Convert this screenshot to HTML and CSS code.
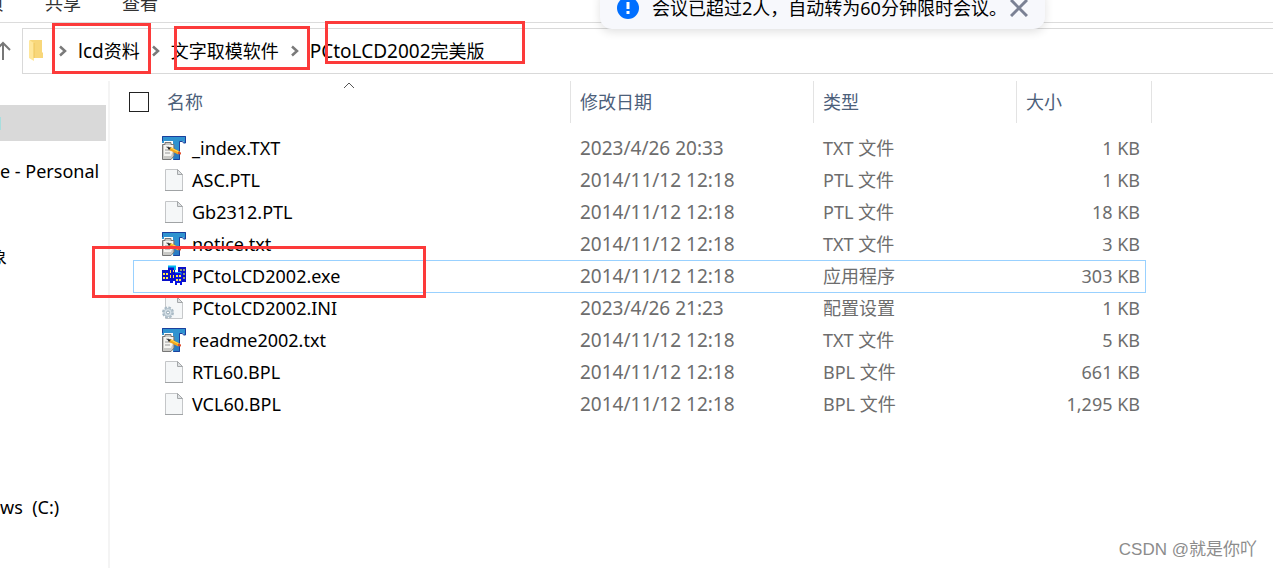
FILE: index.html
```html
<!DOCTYPE html>
<html lang="zh-CN">
<head>
<meta charset="utf-8">
<title>PCtoLCD2002完美版</title>
<link rel="stylesheet" href="styles.css">
</head>
<body>
<svg class="sprite" aria-hidden="true">
  <symbol id="text-icon" viewBox="0 0 24 24">
    <path d="M0 0h24v7h-2l-1-2h-3v19h-7V5H2v2H0z" fill="#2f93d0"/>
    <path d="M0.500 5V.5h23V7h-2l-1-1.500h-3v18h-6" fill="none" stroke="#1b3f9c"/>
    <path d="M12 6v5l5 6v6h-5z" fill="#2a7cc4"/>
    <path d="M.5 8.500H3V6.500h6v2h3V20l-3 3.500H.5z" fill="#c9c9c6" stroke="#777"/>
    <path d="M2 9h9v6l-2 5H2z" fill="#f5f5f2"/>
    <path d="M4 11h3M3 14h6M3 17h5" stroke="#999"/>
    <path d="M8 12.500l9 4.500" stroke="#f4a51c" stroke-width="3.500"/>
    <path d="M8 11.500l10 5" stroke="#ffdf55"/>
    <path d="M16 15.500l3 1v2l-3-.5" fill="#e0502f"/>
    <path d="M5 11l4 .5-2 2.500z" fill="#222"/>
  </symbol>
  <symbol id="page-icon" viewBox="0 0 24 24">
    <path d="M3.500 1.500h12l5 5v16h-17z" fill="#f5f7f8" stroke="#c4c6c8"/>
    <path d="M15.500 1.500v5h5z" fill="#dfe2e4" stroke="#a5a8aa"/>
    <path d="M3 22.500h18" stroke="#a0a3a5"/>
  </symbol>
  <symbol id="config-icon" viewBox="0 0 24 24">
    <path d="M3.500 1.500h12l5 5v16h-17z" fill="#f5f7f8" stroke="#c6c8ca"/>
    <path d="M15.500 1.500v5h5z" fill="#dfe2e4" stroke="#a5a8aa"/>
    <circle cx="6" cy="16.500" r="4.500" fill="#dce6ed" stroke="#a9bac6" stroke-width="3" stroke-dasharray="2.300 1.200"/>
    <circle cx="6" cy="16.500" r="4" fill="#d5e0e7" stroke="#b3c2cc"/>
    <circle cx="6" cy="16.500" r="1.500" fill="#fff" stroke="#8fa3b0"/>
  </symbol>
  <symbol id="exe-icon" viewBox="0 0 24 24">
    <path d="M0 6h7v11H0zM6 3h7v14H6zM16 3h8v15h-8z" fill="#0a10c8"/>
    <path d="M6 2.500h7V6" fill="none" stroke="#00b7f0" stroke-width="2"/>
    <path d="M13 9h7v12h-2v-2h-3v2h-2zM8 16h3v3H8z" fill="#0812df"/>
    <path d="M13 8.500h6v2" fill="none" stroke="#1591f1"/>
    <path d="M1 9h2v2H1zM4 9h2v2H4zM1 13h2v2H1zM4 13h2v2H4zM8 6h1v3H8zM11 6h1v2h-1zM8 11h1v3H8zM11 11h1v3h-1zM14 11h2v2h-2zM17 11h2v2h-2zM14 15h2v2h-2zM17 15h2v2h-2z" fill="#ffe449"/>
    <path d="M18 5h2v2h-2zM21 5h2v2h-2zM21 9h2v2h-2zM21 13h2v2h-2z" fill="#8c9a72"/>
  </symbol>
  <symbol id="chevron" viewBox="0 0 8 12">
    <path d="M1 1.500l5 4.500-5 4.500" fill="none" stroke="#7a7a7a" stroke-width="2.500"/>
  </symbol>
</svg>

<nav class="ribbon">
  <button class="tab">页</button>
  <button class="tab">共享</button>
  <button class="tab">查看</button>
</nav>

<div class="location">
  <button class="up" aria-label="向上">
    <svg width="20" height="20" viewBox="0 0 20 20"><path d="M10 19V2M3 9l7-7 7 7" fill="none" stroke="#777" stroke-width="2"/></svg>
  </button>
  <div class="address">
    <svg class="folder" width="14" height="21" viewBox="0 0 14 21">
      <path d="M1 0h12v12l1 1v5H4z" fill="#f8d77a"/>
      <path d="M0 0l5 3v18l-5-3z" fill="#ffe79b"/>
      <path d="M5 3v15" stroke="#edc65a"/>
    </svg>
    <svg class="chevron"><use href="#chevron"/></svg>
    <a class="crumb" href="#"><span class="latin">lcd</span>资料</a>
    <svg class="chevron"><use href="#chevron"/></svg>
    <a class="crumb" href="#">文字取模软件</a>
    <svg class="chevron"><use href="#chevron"/></svg>
    <a class="crumb" href="#"><span class="latin">PCtoLCD2002</span>完美版</a>
  </div>
</div>

<div class="main">
  <aside class="tree">
    <div class="tree-current"></div>
    <a class="tree-item personal" href="#">e - Personal</a>
    <a class="tree-item objects" href="#">象</a>
    <a class="tree-item drive" href="#">ws&nbsp; (C:)</a>
  </aside>
  <main class="files">
    <table class="list">
      <colgroup><col><col class="col-date"><col class="col-type"><col class="col-size"></colgroup>
      <thead>
        <tr>
          <th>
            <label class="select-all"><input type="checkbox" class="check">名称</label>
            <svg class="sort" width="12" height="7" viewBox="0 0 12 7"><path d="M1 6l5-5 5 5" fill="none" stroke="#555"/></svg>
          </th>
          <th>修改日期</th><th>类型</th><th>大小</th>
        </tr>
      </thead>
      <tbody>
        <tr><td><div class="file"><svg class="icon"><use href="#text-icon"/></svg>_index.TXT</div></td><td class="date">2023/4/26 20:33</td><td>TXT 文件</td><td class="size">1 KB</td></tr>
        <tr><td><div class="file"><svg class="icon"><use href="#page-icon"/></svg>ASC.PTL</div></td><td class="date">2014/11/12 12:18</td><td>PTL 文件</td><td class="size">1 KB</td></tr>
        <tr><td><div class="file"><svg class="icon"><use href="#page-icon"/></svg>Gb2312.PTL</div></td><td class="date">2014/11/12 12:18</td><td>PTL 文件</td><td class="size">18 KB</td></tr>
        <tr><td><div class="file"><svg class="icon"><use href="#text-icon"/></svg>notice.txt</div></td><td class="date">2014/11/12 12:18</td><td>TXT 文件</td><td class="size">3 KB</td></tr>
        <tr class="focused"><td><div class="file"><svg class="icon"><use href="#exe-icon"/></svg>PCtoLCD2002.exe</div></td><td class="date">2014/11/12 12:18</td><td>应用程序</td><td class="size">303 KB</td></tr>
        <tr><td><div class="file"><svg class="icon"><use href="#config-icon"/></svg>PCtoLCD2002.INI</div></td><td class="date">2023/4/26 21:23</td><td>配置设置</td><td class="size">1 KB</td></tr>
        <tr><td><div class="file"><svg class="icon"><use href="#text-icon"/></svg>readme2002.txt</div></td><td class="date">2014/11/12 12:18</td><td>TXT 文件</td><td class="size">5 KB</td></tr>
        <tr><td><div class="file"><svg class="icon"><use href="#page-icon"/></svg>RTL60.BPL</div></td><td class="date">2014/11/12 12:18</td><td>BPL 文件</td><td class="size">661 KB</td></tr>
        <tr><td><div class="file"><svg class="icon"><use href="#page-icon"/></svg>VCL60.BPL</div></td><td class="date">2014/11/12 12:18</td><td>BPL 文件</td><td class="size">1,295 KB</td></tr>
      </tbody>
    </table>
  </main>
</div>

<div class="toast" role="status">
  <svg width="22" height="22" viewBox="0 0 22 22"><circle cx="11" cy="11" r="11" fill="#006fff"/><path d="M11 5v7M11 14v3" stroke="#fff" stroke-width="3"/></svg>
  <span class="toast-text">会议已超过2人，自动转为60分钟限时会议。</span>
  <button class="close" aria-label="关闭"><svg width="18" height="18" viewBox="0 0 18 18"><path d="M1 1l16 16M17 1L1 17" stroke="#7b8194" stroke-width="3"/></svg></button>
</div>

<div class="mark mark-lcd"></div>
<div class="mark mark-tool"></div>
<div class="mark mark-version"></div>
<div class="mark mark-exe"></div>

<div class="watermark">CSDN @就是你吖</div>
</body>
</html>
```
FILE: styles.css
```css
* { box-sizing: border-box; }

body {
  position: relative;
  display: flex;
  flex-direction: column;
  min-height: 100vh;
  margin: 0;
  overflow: hidden;
  background: #fff;
  color: #000;
  font: 18px/24px "Noto Sans", "Noto Sans CJK SC", sans-serif;
}

button {
  padding: 0;
  border: 0;
  background: none;
  color: inherit;
  font: inherit;
}

a { color: inherit; text-decoration: none; }
svg { display: block; flex: none; }
.sprite { position: absolute; width: 0; height: 0; }

.ribbon {
  display: flex;
  align-items: flex-end;
  gap: 41px;
  height: 23px;
  padding-bottom: 7px;
  margin-left: -14px;
  border-bottom: 1px solid #dcdcdc;
  color: #333;
}

.location { display: flex; padding-top: 5px; }

.up {
  display: flex;
  align-items: center;
  justify-content: flex-end;
  width: 22px;
  padding-right: 9px;
}
.up svg { margin-left: -8px; }

.address {
  display: flex;
  flex: 1;
  align-items: center;
  height: 46px;
  padding: 0 0 1px 6px;
  border: 1px solid #d9d9d9;
  border-right: 0;
}

.address .chevron { width: 8px; height: 12px; margin: 0 11px 0 12px; }
.folder { margin-right: 4px; }
.latin { font-size: 19px; }

.main { display: flex; flex: 1; padding-top: 7px; }

.tree {
  display: flex;
  flex-direction: column;
  width: 110px;
  padding-top: 24px;
  border-right: 2px solid #f4f4f4;
}

.tree-current {
  display: flex;
  align-items: center;
  height: 36px;
  margin-right: 2px;
  background: #d9d9d9;
}
.tree-current::before { content: ""; width: 1px; height: 13px; background: #a8dede; }

.tree-item { white-space: nowrap; }
.personal { margin-top: 18px; }
.objects { margin: 62px 0 0 -11px; }
.drive { margin-top: 226px; }

.files { flex: 1; padding-right: 121px; }

.list { width: 100%; border-spacing: 0; table-layout: fixed; }
.col-date { width: 243px; }
.col-type { width: 203px; }
.col-size { width: 135px; }

th {
  position: relative;
  height: 42px;
  padding: 0 0 0 9px;
  border-right: 1px solid #e3e3e3;
  color: #4c607a;
  font-weight: 400;
  text-align: left;
}
th:first-child { padding-left: 19px; }

.select-all { display: flex; align-items: center; gap: 18px; }

.check {
  appearance: none;
  width: 20px;
  height: 20px;
  margin: 0;
  border: 1px solid #222;
  background: #fff;
}

.sort { position: absolute; top: 1px; left: 50%; margin-left: 3px; }

tbody::before { content: ""; display: block; height: 9px; }
td { height: 32px; padding: 0 0 0 9px; color: #6d6d6d; }
td:first-child { padding-left: 52px; color: #000; }
td.size { padding: 0 12px 0 0; text-align: right; }
.date { font-size: 19px; }
.file { display: flex; align-items: center; gap: 6px; }
.icon { width: 24px; height: 24px; }

.focused { position: relative; }
.focused td:last-child::after {
  content: "";
  position: absolute;
  inset: 0 6px -1px 23px;
  border: 1px solid #99d1ff;
}

.toast {
  position: absolute;
  top: -13px;
  left: 600px;
  display: flex;
  align-items: center;
  height: 42px;
  padding: 0 17px;
  border-radius: 12px;
  background: #f7f8fc;
  box-shadow: 0 3px 10px rgba(0, 0, 0, 0.12);
  white-space: nowrap;
}
.toast-text { margin: 0 3px 0 13px; }

.mark { position: absolute; border: 3px solid #fc3a3a; }
.mark-lcd { left: 52px; top: 23px; width: 99px; height: 51px; }
.mark-tool { left: 174px; top: 26px; width: 136px; height: 44px; }
.mark-version { left: 325px; top: 21px; width: 200px; height: 43px; }
.mark-exe { left: 92px; top: 246px; width: 334px; height: 52px; }

.watermark {
  position: absolute;
  right: 16px;
  bottom: 6px;
  color: #8c8c8c;
  font: 17px/24px "Liberation Sans", "Noto Sans CJK SC", sans-serif;
}
```
